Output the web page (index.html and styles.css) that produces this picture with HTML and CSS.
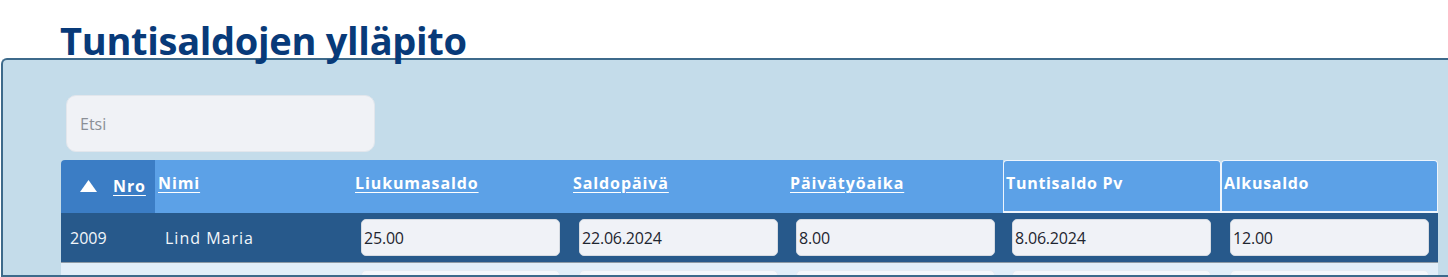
FILE: index.html
```html
<!DOCTYPE html>
<html lang="fi">
<head>
<meta charset="utf-8">
<title>Tuntisaldojen ylläpito</title>
<link rel="stylesheet" href="styles.css">
</head>
<body>
<h1 class="title">Tuntisaldojen ylläpito</h1>
<section class="panel">
  <div class="search"><input class="search-input" type="text" placeholder="Etsi" autofocus></div>
  <div class="grid">
    <div class="hcell hcell-sorted"><svg class="tri" width="17" height="12" viewBox="0 0 17 12"><polygon points="8.5,0 17,12 0,12" fill="#ffffff"/></svg><a class="hlink" href="#">Nro</a></div>
    <div class="hcell"><a class="hlink" href="#">Nimi</a></div>
    <div class="hcell"><a class="hlink" href="#">Liukumasaldo</a></div>
    <div class="hcell"><a class="hlink" href="#">Saldopäivä</a></div>
    <div class="hcell"><a class="hlink" href="#">Päivätyöaika</a></div>
    <div class="hcell hcell-plain">Tuntisaldo Pv</div>
    <div class="hcell hcell-plain">Alkusaldo</div>

    <div class="cell row-sel cell-text">2009</div>
    <div class="cell row-sel cell-name">Lind Maria</div>
    <div class="cell row-sel"><input class="val" type="text" value="25.00"></div>
    <div class="cell row-sel"><input class="val" type="text" value="22.06.2024"></div>
    <div class="cell row-sel"><input class="val" type="text" value="8.00"></div>
    <div class="cell row-sel"><input class="val" type="text" value="8.06.2024"></div>
    <div class="cell row-sel"><input class="val" type="text" value="12.00"></div>

    <div class="cell row-alt"></div>
    <div class="cell row-alt"></div>
    <div class="cell row-alt"><input class="val val-alt" type="text" value=""></div>
    <div class="cell row-alt"><input class="val val-alt" type="text" value=""></div>
    <div class="cell row-alt"><input class="val val-alt" type="text" value=""></div>
    <div class="cell row-alt"><input class="val val-alt" type="text" value=""></div>
    <div class="cell row-alt"><input class="val val-alt" type="text" value=""></div>
  </div>
</section>
</body>
</html>
```
FILE: styles.css
```css
html, body {
  margin: 0;
  padding: 0;
  background: #ffffff;
  overflow: hidden;
}
body {
  font-family: "Open Sans", "Noto Sans", sans-serif;
}
.title {
  position: relative;
  z-index: 1;
  margin: 0 0 -9px 0;
  padding: 19px 0 0 60px;
  height: 48px;
  font-family: "Open Sans", "Noto Sans", sans-serif;
  font-size: 38px;
  line-height: 42px;
  font-weight: 700;
  letter-spacing: -0.3px;
  color: #083a79;
}
.panel {
  box-sizing: border-box;
  height: 219px;
  margin-left: 1px;
  padding: 35px 0 0 58px;
  background: #c4dcea;
  border: 2px solid #3d6a8b;
  border-right: none;
  border-top-left-radius: 6px;
  overflow: hidden;
}
.search {
  padding-left: 5px;
  margin-bottom: 8px;
}
.search-input {
  box-sizing: border-box;
  width: 309px;
  height: 57px;
  padding: 0 13px;
  background: #f0f2f6;
  border: 1px solid #e2e6ec;
  border-radius: 10px;
  font-family: "Open Sans", "Noto Sans", sans-serif;
  font-size: 16px;
  color: #333;
  caret-color: #222;
  outline: none;
}
.search-input::placeholder {
  color: #8b8f97;
}
.grid {
  display: grid;
  grid-template-columns: 94px 197px 218px 217px 216px 218px 217px;
  grid-template-rows: 53px 50px 50px;
}
.hcell {
  box-sizing: border-box;
  background: #5ca1e7;
  padding: 12px 0 0 3px;
  font-size: 16px;
  font-weight: 700;
  color: #ffffff;
  letter-spacing: 0.9px;
}
.hcell-sorted {
  background: #3b7dc5;
  border-top-left-radius: 4px;
  padding: 15px 0 0 19px;
  display: flex;
  align-items: flex-start;
  gap: 16px;
}
.tri {
  flex: none;
  margin-top: 5px;
}
.hlink {
  color: #ffffff;
  text-decoration: underline;
  text-underline-offset: 3px;
  text-decoration-thickness: 1px;
}
.hcell-plain {
  border: 1px solid #eef5fd;
  border-bottom-width: 2px;
  border-radius: 4px 4px 0 0;
  padding: 11px 0 0 2px;
  letter-spacing: 0.7px;
}
.cell {
  box-sizing: border-box;
  display: flex;
  align-items: center;
}
.row-sel {
  background: #27598b;
  border-bottom: 1px solid #8d9aa6;
  color: #f2f6fa;
  font-size: 16px;
}
.cell-text {
  padding-left: 9px;
}
.cell-name {
  padding-left: 10px;
  letter-spacing: 1px;
}
.row-alt {
  background: #e1eef9;
  align-items: flex-start;
}
.val {
  box-sizing: border-box;
  width: 199px;
  height: 37px;
  margin: 0 0 0 9px;
  padding: 0 2px;
  background: #f0f2f7;
  border: 1px solid #d6dbe2;
  border-radius: 5px;
  font-family: "Open Sans", "Noto Sans", sans-serif;
  font-size: 16px;
  letter-spacing: -0.2px;
  color: #1e2530;
  outline: none;
}
.val-alt {
  margin-top: 7px;
  background: #f4f7fb;
  border-color: #e6ecf3;
}
```
